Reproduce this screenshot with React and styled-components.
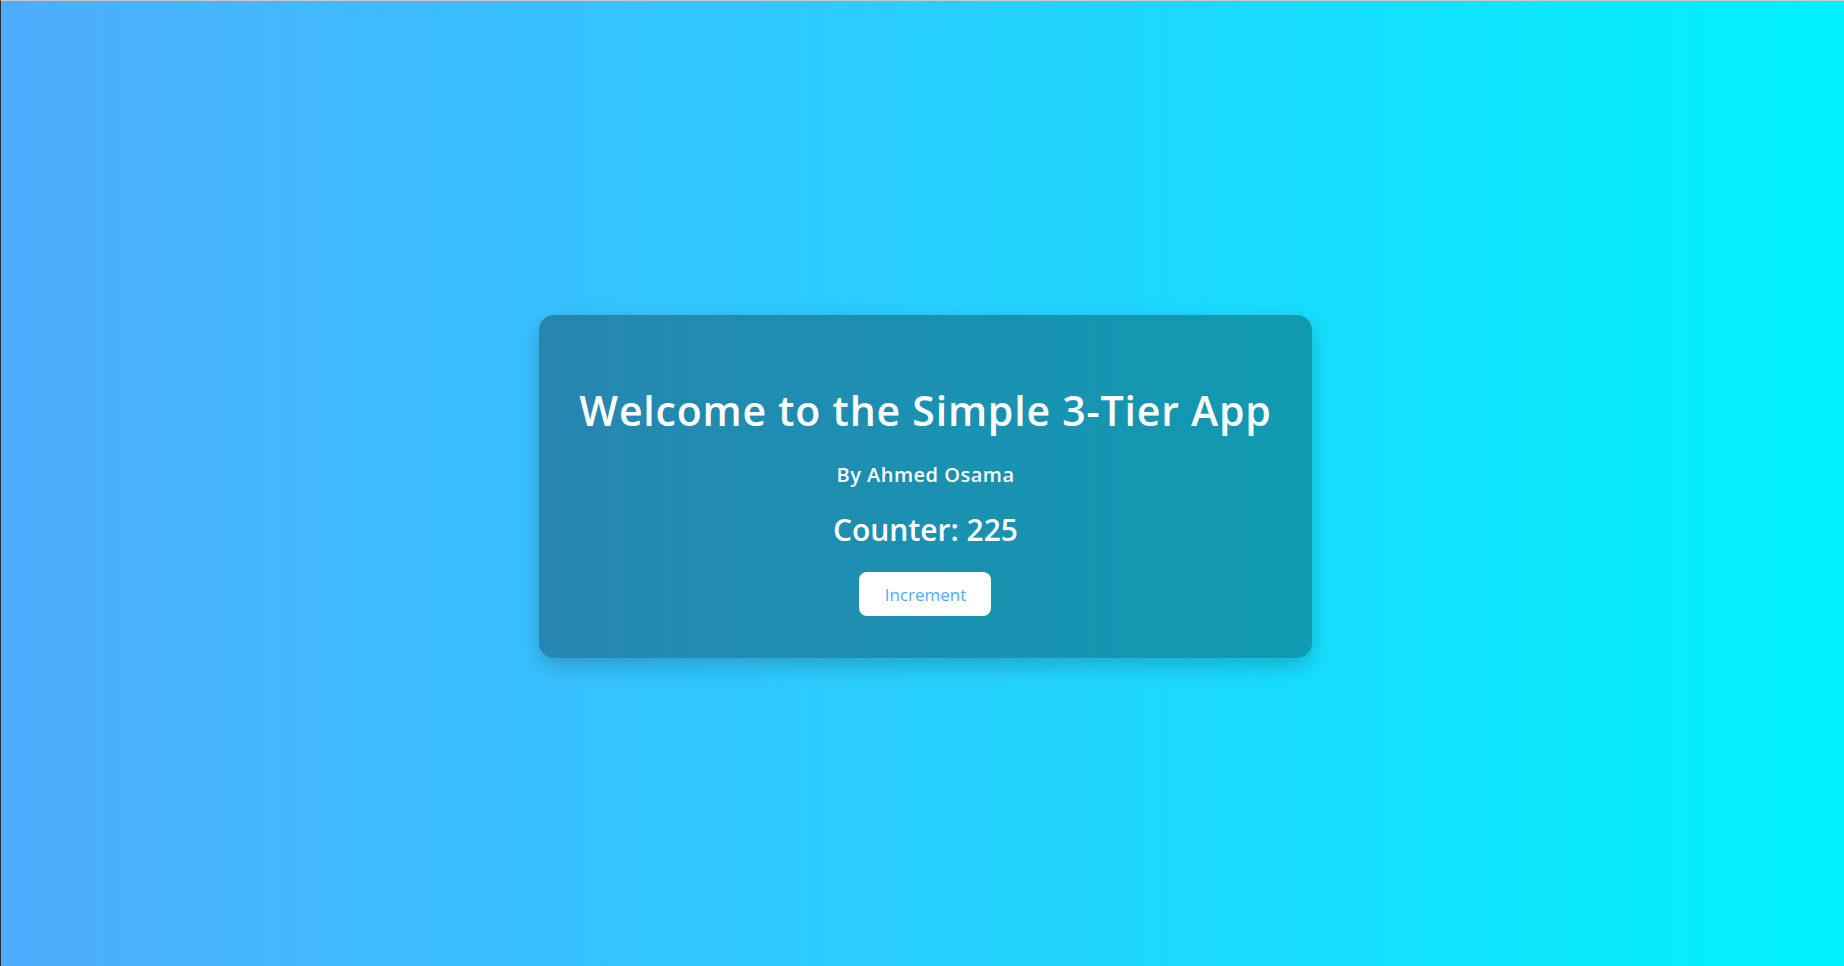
import styled, { createGlobalStyle } from "styled-components";
import { useState } from "react";

const GlobalStyle = createGlobalStyle`
  * { box-sizing: border-box; }
  html, body { margin: 0; padding: 0; height: 100%; }
  body {
    font-family: "Open Sans", "Noto Sans", sans-serif;
    border-top: 1px solid #c9c9c9;
    border-left: 1px solid #2a2a2a;
  }
  #root { height: 100%; }
`;

const Page = styled.div`
  min-height: 100%;
  height: 100%;
  display: flex;
  align-items: center;
  justify-content: center;
  background: linear-gradient(to right, #4facfe 0%, #00f2fe 100%);
  color: #fff;
`;

const Card = styled.div`
  background: rgba(0, 0, 0, 0.3);
  border-radius: 15px;
  padding: 40px 40px 42px;
  text-align: center;
  box-shadow: 0 8px 22px rgba(0, 0, 0, 0.2);
  margin-left: 6px;
  margin-top: 6px;
`;

const Title = styled.h1`
  font-family: "Open Sans", "Noto Sans", sans-serif;
  font-weight: 600;
  font-size: 41px;
  letter-spacing: 0.8px;
  line-height: 1.2;
  margin: 31px 0 26px;
`;

const Author = styled.h3`
  font-family: "Open Sans", sans-serif;
  font-weight: 600;
  font-size: 20px;
  letter-spacing: 0.5px;
  margin: 0 0 21px;
`;

const Counter = styled.h2`
  font-family: "Open Sans", sans-serif;
  font-weight: 600;
  font-size: 30px;
  margin: 0 0 22px;
`;

const Button = styled.button`
  background: #fff;
  color: #4facfe;
  border: none;
  border-radius: 8px;
  padding: 0 24px;
  height: 44px;
  min-width: 132px;
  font-family: "Open Sans", "Noto Sans", sans-serif;
  font-size: 17px;
  cursor: pointer;
`;

export default function App() {
  const [count, setCount] = useState(225);
  return (
    <>
      <GlobalStyle />
      <Page>
        <Card>
          <Title>Welcome to the Simple 3-Tier App</Title>
          <Author>By Ahmed Osama</Author>
          <Counter>Counter: {count}</Counter>
          <Button onClick={() => setCount(count + 1)}>Increment</Button>
        </Card>
      </Page>
    </>
  );
}
